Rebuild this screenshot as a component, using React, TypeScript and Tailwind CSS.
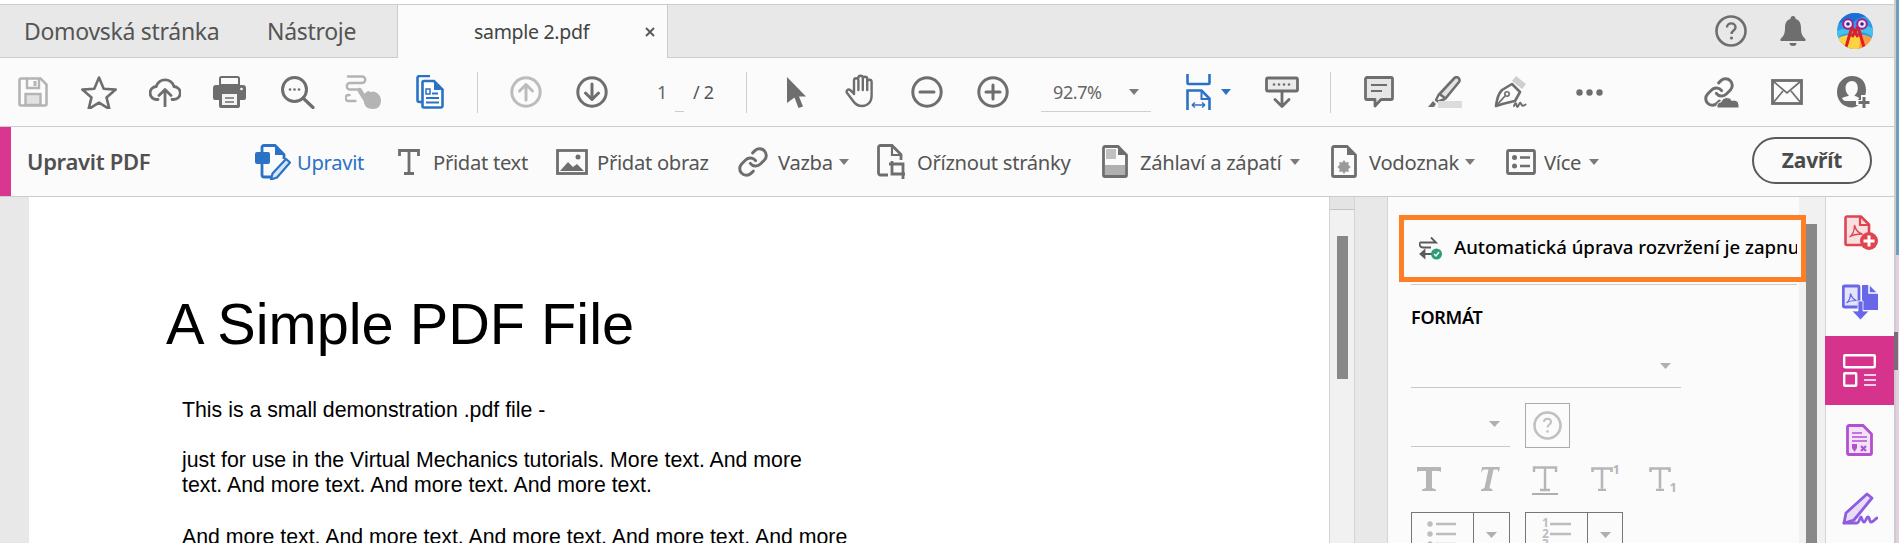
import React from "react";

const G = "#6e6e6e";
const L = "#b4b4b4";
const B = "#2a72c6";

type P = { w: number; h: number; children: React.ReactNode; className?: string };
function Ic({ w, h, className = "", children }: P) {
  return (
    <svg width={w} height={h} viewBox={`0 0 ${w} ${h}`} fill="none" className={`shrink-0 ${className}`}>
      {children}
    </svg>
  );
}
const Caret = ({ className = "", color = "#7a7a7a" }: { className?: string; color?: string }) => (
  <Ic w={10} h={6} className={className}><path d="M0 0h10L5 6z" fill={color} /></Ic>
);
const CaretL = ({ className = "", color = "#b0b0b0" }: { className?: string; color?: string }) => (
  <Ic w={11} h={6} className={className}><path d="M0 0h11L5.500 6z" fill={color} /></Ic>
);
const Sep = ({ className = "" }: { className?: string }) => <div className={`w-px h-[41px] bg-[#cfcfcf] shrink-0 ${className}`} />;

const LinkShape = ({ c = G }: { c?: string }) => (
  <g transform="scale(1.333)" stroke={c} strokeWidth="2.250" fill="none" strokeLinecap="round" strokeLinejoin="round">
    <path d="M10 13a5 5 0 0 0 7.540.540l3-3a5 5 0 0 0-7.070-7.070l-1.720 1.710" />
    <path d="M14 11a5 5 0 0 0-7.540-.540l-3 3a5 5 0 0 0 7.070 7.070l1.710-1.710" />
  </g>
);

function CircleArrow({ up, c, className }: { up?: boolean; c: string; className?: string }) {
  return (
    <Ic w={32} h={32} className={className}>
      <circle cx="16" cy="16" r="14.200" stroke={c} strokeWidth="3" />
      <path d={up ? "M16 24V9M9.500 15L16 8.500l6.500 6.500" : "M16 8v15M9.500 17l6.500 6.500 6.500-6.500"} stroke={c} strokeWidth="3" strokeLinecap="round" strokeLinejoin="round" />
    </Ic>
  );
}

const Tb = ({ t, w, ml, blue }: { t: string; w: string; ml: string; blue?: boolean }) => (
  <span className={`${w} ${ml} shrink-0 whitespace-nowrap text-[20.2px] leading-[28px] tracking-[-0.3px] ${blue ? "text-[#2a72c6]" : "text-[#555555]"}`}>{t}</span>
);

export default function App() {
  return (
    <div className="relative flex w-[1899px] h-[543px] overflow-hidden bg-white font-['Noto_Sans',sans-serif]">
      <div className="flex flex-col w-[1894px] shrink-0">
        <div className="h-[4px] bg-white shrink-0" />
        {/* Tabs */}
        <div className="flex h-[54px] shrink-0 items-stretch bg-[#e8e8e8] border-y border-[#cccccc]">
          <div className="flex items-center w-[398px] shrink-0 text-[23px] tracking-[-0.3px] text-[#555555] border-r border-[#cccccc]">
            <span className="ml-[24px] w-[243px]">Domovská stránka</span>
            <span>Nástroje</span>
          </div>
          <div className="relative flex items-center w-[270px] shrink-0 -mb-px bg-[#fbfbfb] border-r border-[#cccccc] text-[#444444]">
            <span className="ml-[76px] text-[19.5px] tracking-[-0.3px]">sample 2.pdf</span>
            <Ic w={10} h={10} className="ml-[56px]"><path d="M1 1l8 8M9 1l-8 8" stroke="#555" strokeWidth="1.800" /></Ic>
          </div>
          <div className="flex-1 flex items-center">
            <Ic w={32} h={32} className="ml-[1047px]">
              <circle cx="16" cy="16" r="14.500" stroke={G} strokeWidth="2.600" />
              <path d="M12 12.500c0-5.500 8.500-5.500 8.500 0 0 3-4 3-4 6.500" stroke={G} strokeWidth="2.400" fill="none" />
              <circle cx="16.500" cy="23" r="1.600" fill={G} />
            </Ic>
            <Ic w={26} h={30} className="ml-[33px]">
              <path d="M13 0a2.500 2.500 0 0 1 2.500 3C20 4 21 8 21 12c0 5 1 8 4.500 11v2H.5v-2C4 20 5 17 5 12c0-4 1-8 5.500-9A2.500 2.500 0 0 1 13 0z" fill={G} />
              <path d="M9.500 27h7a3.500 3 0 0 1-7 0z" fill={G} />
            </Ic>
            <Ic w={36} h={36} className="ml-[31px]">
              <defs><clipPath id="av"><circle cx="18" cy="18" r="18" /></clipPath></defs>
              <g clipPath="url(#av)">
                <rect width="36" height="36" fill="#2f9be6" />
                <path d="M0 12C6 6 10 14 18 8s12-6 18 0V0H0z" fill="#1c6fd8" />
                <path d="M0 26c6-8 10-4 18-6s12 0 18 4v-8c-8-6-12-2-18 0S6 14 0 18z" fill="#45c1ee" />
                <path d="M0 36V26c5-4 11-4 18-4s13 0 18 4v10z" fill="#ffd23f" />
                <path d="M24 22c5 0 9 2 12 4v10H22z" fill="#ff9b3f" />
                <path d="M15 14L9 34M21 14l6 20M15 14l6 10M21 14l-6 10" stroke="#e11d2a" strokeWidth="3" />
                <circle cx="11" cy="11" r="4.800" fill="#f5e6f5" stroke="#a0208c" strokeWidth="2" />
                <circle cx="25" cy="11" r="4.800" fill="#f5e6f5" stroke="#a0208c" strokeWidth="2" />
                <circle cx="11" cy="11" r="1.800" fill="#2a2a8c" />
                <circle cx="25" cy="11" r="1.800" fill="#2a2a8c" />
              </g>
            </Ic>
          </div>
        </div>

        {/* Main toolbar */}
        <div className="flex h-[69px] shrink-0 items-center bg-[#fbfbfb] border-b border-[#cccccc]">
          <Ic w={30} h={30} className="ml-[18px]">
            <path d="M3 1.500h19.500l6 6V27a1.500 1.500 0 0 1-1.500 1.500H3A1.500 1.500 0 0 1 1.500 27V3A1.500 1.500 0 0 1 3 1.500z" stroke={L} strokeWidth="2.600" />
            <path d="M9 2v9h12V2" stroke={L} strokeWidth="2.400" /><rect x="15.500" y="4" width="3" height="5" fill={L} />
            <rect x="7.500" y="17" width="15" height="11" fill="#e2e2e2" stroke={L} strokeWidth="2.400" />
          </Ic>
          <Ic w={36} h={34} className="ml-[33px]">
            <path d="M18 2.500l4.700 11.200 12 .9-9.200 7.800 2.900 11.700L18 27.700 7.600 34.100l2.900-11.700L1.300 14.600l12-.9z" stroke={G} strokeWidth="2.600" strokeLinejoin="round" />
          </Ic>
          <Ic w={32} h={30} className="ml-[32px]">
            <path d="M9 22.500H8a6.500 6.500 0 0 1-.8-13A9.300 9.300 0 0 1 25 9.500a6.500 6.500 0 0 1-.500 13H23" stroke={G} strokeWidth="2.800" strokeLinecap="round" />
            <path d="M16 29V13M10 18.500l6-6 6 6" stroke={G} strokeWidth="2.800" strokeLinecap="round" strokeLinejoin="round" />
          </Ic>
          <Ic w={33} h={32} className="ml-[32px]">
            <path d="M7 9V2.500A1.500 1.500 0 0 1 8.500 1h16A1.500 1.500 0 0 1 26 2.500V9z" stroke={G} strokeWidth="2" fill="#fbfbfb" />
            <path d="M3 9h27a3 3 0 0 1 3 3v10a2 2 0 0 1-2 2h-4v6a2 2 0 0 1-2 2H8a2 2 0 0 1-2-2v-6H2a2 2 0 0 1-2-2V12a3 3 0 0 1 3-3z" fill={G} />
            <rect x="9" y="18" width="15" height="11" fill="#f4f4f4" /><path d="M12 22h9M12 26h9" stroke={G} strokeWidth="1.700" /><circle cx="28.500" cy="13" r="1.300" fill="#fff" />
          </Ic>
          <Ic w={34} h={33} className="ml-[35px]">
            <circle cx="13.500" cy="13.500" r="12" stroke={G} strokeWidth="3" />
            <path d="M22 22l10 9.500" stroke={G} strokeWidth="3.200" strokeLinecap="round" />
            <circle cx="9" cy="13.500" r="1.300" fill={G} /><circle cx="13.500" cy="13.500" r="1.300" fill={G} /><circle cx="18" cy="13.500" r="1.300" fill={G} />
          </Ic>
          <Ic w={36} h={34} className="ml-[30px]">
            <path d="M3 1.500h14a3 3 0 0 1 0 6.500H5a3.200 3.200 0 0 0 0 6.500h7M4.500 20H3.500a3 3 0 0 0 0 6h7" stroke={L} strokeWidth="2.400" strokeLinecap="round" />
            <path d="M14.500 15l5.500 9" stroke={L} strokeWidth="4.500" strokeLinecap="round" />
            <path d="M19 19l4-3 3 1 3-.5 3 1.500c2.500 2 4 4 4 7.500 0 5-3 8.500-8 8.500-6 0-8-3-9-6z" fill={L} />
          </Ic>
          <Ic w={28} h={34} className="ml-[35px]">
            <path d="M6 27H3.500a2 2 0 0 1-2-2V3a2 2 0 0 1 2-2H14" stroke={B} strokeWidth="2.600" fill="none" />
            <path d="M8 6h10l8.500 8.500V31a1.500 1.500 0 0 1-1.500 1.500H8A1.500 1.500 0 0 1 6.500 31V7.500A1.500 1.500 0 0 1 8 6z" stroke={B} strokeWidth="2.600" fill="#fff" />
            <path d="M18 6v9h8.500z" fill={B} />
            <rect x="10" y="14" width="4" height="5" stroke={B} strokeWidth="1.500" /><path d="M16 18.500h6M10 23h13M10 27.500h13" stroke={B} strokeWidth="1.800" />
          </Ic>
          <Sep className="ml-[33px]" />
          <CircleArrow up c="#bcbcbc" className="ml-[32px]" />
          <CircleArrow c={G} className="ml-[34px]" />
          <span className="ml-[49px] w-[10px] text-[18px] text-[#666666] tracking-[-0.3px]">1</span>
          <div className="ml-[8px] w-[9px] h-px self-end mb-[14px] bg-[#cccccc]" />
          <span className="ml-[9px] w-[22px] whitespace-nowrap text-[18px] text-[#555555] tracking-[-0.3px]">/ 2</span>
          <Sep className="ml-[31px]" />
          <Ic w={19} h={31} className="ml-[40px]"><path d="M0 0l19 19.500h-7l4 10-4.500 1.500-4-10.500L0 26z" fill={G} /></Ic>
          <Ic w={32} h={36} className="ml-[39px]">
            <path d="M9 20V6.500a2.200 2.200 0 0 1 4.400 0V16m0-12a2.200 2.200 0 0 1 4.400 0v12m0-11a2.200 2.200 0 0 1 4.400 0v11m0-8a2.200 2.200 0 0 1 4.400 0v14c0 6-4 10-9.500 10-4.500 0-7-2-9-5l-6-8c-1.500-2 1-4.500 3-3l3.900 3.500" stroke={G} strokeWidth="2.400" strokeLinecap="round" strokeLinejoin="round" />
          </Ic>
          <Ic w={32} h={32} className="ml-[34px]">
            <circle cx="16" cy="16" r="14.200" stroke={G} strokeWidth="3" /><path d="M9 16h14" stroke={G} strokeWidth="3" strokeLinecap="round" />
          </Ic>
          <Ic w={32} h={32} className="ml-[34px]">
            <circle cx="16" cy="16" r="14.200" stroke={G} strokeWidth="3" /><path d="M9 16h14M16 9v14" stroke={G} strokeWidth="3" strokeLinecap="round" />
          </Ic>
          <div className="ml-[32px] w-[110px] h-[39px] mt-[1px] flex items-center border-b border-[#cfcfcf] shrink-0">
            <span className="ml-[12px] w-[76px] text-[18px] text-[#666666] tracking-[-0.4px]">92.7%</span>
            <Caret />
          </div>
          <Ic w={25} h={36} className="ml-[35px]">
            <path d="M1.500 0v9a1 1 0 0 0 1 1h20a1 1 0 0 0 1-1V0" stroke={B} strokeWidth="2.600" />
            <path d="M1.500 36V16.500h14l8 8V36" stroke={B} strokeWidth="2.600" /><path d="M15.500 16.500V25h8" stroke={B} strokeWidth="2" />
            <path d="M6 31h13M6 31l3-2.500M6 31l3 2.500M19 31l-3-2.500M19 31l-3 2.500" stroke={B} strokeWidth="1.500" />
          </Ic>
          <Caret color={B} className="ml-[10px]" />
          <Ic w={34} h={32} className="ml-[34px]">
            <rect x="1.500" y="2" width="31" height="13" rx="1.500" fill="#ebebeb" stroke={G} strokeWidth="2.800" />
            <circle cx="9" cy="8.500" r="1.300" fill={G} /><circle cx="14" cy="8.500" r="1.300" fill={G} /><circle cx="19" cy="8.500" r="1.300" fill={G} /><circle cx="24" cy="8.500" r="1.300" fill={G} />
            <path d="M17 16v14M10 23.500l7 7 7-7" stroke={G} strokeWidth="2.800" strokeLinecap="round" strokeLinejoin="round" />
          </Ic>
          <Sep className="ml-[31px]" />
          <Ic w={30} h={32} className="ml-[33px]">
            <path d="M3 1.500h24A1.500 1.500 0 0 1 28.500 3v19a1.500 1.500 0 0 1-1.500 1.500H17l-6 6.500v-6.500H3A1.500 1.500 0 0 1 1.500 22V3A1.500 1.500 0 0 1 3 1.500z" fill="#e6e6e6" stroke={G} strokeWidth="2.800" strokeLinejoin="round" />
            <path d="M7 9h16M7 15h11" stroke={G} strokeWidth="1.800" />
          </Ic>
          <Ic w={34} h={32} className="ml-[34px]">
            <path d="M26 2.500a3 3 0 0 1 5 3.500L17.500 22.500l-6-4.500z" fill="#e2e2e2" stroke={G} strokeWidth="2.600" strokeLinejoin="round" />
            <path d="M11 18l-3 6 2 1.500 7-2.500" stroke={G} strokeWidth="2.400" strokeLinejoin="round" /><path d="M0 31l5-6 3 3-2 3z" fill={G} />
            <rect x="10" y="25" width="24" height="7" fill="#dcdcdc" />
          </Ic>
          <Ic w={35} h={32} className="ml-[31px]">
            <path d="M19 5l4-5 10 8-4 5z" fill="#cfcfcf" />
            <path d="M3 30C4 22 6 17 9 14l10-6 8 8-5 9c-4 1-10 2-19 5z" stroke={G} strokeWidth="2.600" strokeLinejoin="round" fill="#fbfbfb" />
            <path d="M3 30l9-10" stroke={G} strokeWidth="1.800" /><circle cx="14" cy="18" r="2.200" stroke={G} strokeWidth="1.600" />
            <path d="M21 30c1-3 2-4 2.500-1s1.500 2 2.500-.500 1.500-2 2.500 0 1.500 1.500 4 0" stroke={G} strokeWidth="2" strokeLinecap="round" />
          </Ic>
          <Ic w={27} h={7} className="ml-[48px]">
            <circle cx="3.500" cy="3.500" r="3.200" fill={G} /><circle cx="13.500" cy="3.500" r="3.200" fill={G} /><circle cx="23.500" cy="3.500" r="3.200" fill={G} />
          </Ic>
          <Ic w={36} h={32} className="ml-[100px]">
            <LinkShape />
            <path d="M14 32v-1a4 4 0 0 1 4-5 6 6 0 0 1 11-1.500 5 5 0 0 1 7 4.500V32z" fill={G} stroke="#fbfbfb" strokeWidth="1" />
          </Ic>
          <Ic w={32} h={26} className="ml-[32px]">
            <rect x="1.500" y="1.500" width="29" height="23" fill="#fbfbfb" stroke={G} strokeWidth="2.800" />
            <path d="M2 2l14 12L30 2M2 24l10-12M30 24L20 12" stroke={G} strokeWidth="1.700" />
          </Ic>
          <Ic w={34} h={32} className="ml-[34px]">
            <path d="M15 0c8.500 0 14 5.500 14 14 0 2-.3 3.500-.7 5H24v5h-5v5h2.500c-2 1.500-4 2.500-6.500 2.500C6.500 31.500 0 25 0 16S6.500 0 15 0z" fill={G} />
            <path d="M15 5c3.700 0 5.800 3 5.800 7 0 3.500-1.500 6-3.500 7.500 1.700 1 4 1.800 5 2.500l-2 3H8c-1.500-.5-2.500-1.700-3-3 2-1 5-1.500 7-2.500-2-1.500-3.500-4-3.500-7.500 0-4 2.800-7 6.500-7z" fill="#fbfbfb" />
            <path d="M27 21v11M21.500 26.500h11" stroke={G} strokeWidth="3" />
          </Ic>
        </div>

        {/* Edit bar */}
        <div className="flex h-[70px] shrink-0 items-center bg-[#fbfbfb] border-b border-[#cccccc]">
          <div className="w-[11px] h-full bg-[#d93690] shrink-0" />
          <span className="ml-[16px] w-[124px] shrink-0 whitespace-nowrap text-[22px] font-semibold tracking-[-0.3px] text-[#505050]">Upravit PDF</span>
          <Ic w={36} h={36} className="ml-[104px]">
            <path d="M7 9V3.500A2 2 0 0 1 9 1.500h11l9 9V15" stroke={B} strokeWidth="2.800" /><path d="M20 1.500V11h9.500z" fill={B} />
            <rect x="0" y="8" width="15" height="12" rx="2" fill={B} />
            <path d="M7 20v11a2 2 0 0 0 2 2h9" stroke={B} strokeWidth="2.800" />
            <path d="M31 15l4 3.500-13 15-6 2 1.500-6z" stroke={B} strokeWidth="2.200" strokeLinejoin="round" fill="#d6e6f7" />
          </Ic>
          <Tb t="Upravit" w="w-[65px]" ml="ml-[6px]" blue />
          <Ic w={22} h={26} className="ml-[36px]">
            <path d="M11 2v22M1.500 7V1.500h19V7M6 24.500h10" stroke={G} strokeWidth="2.800" />
          </Ic>
          <Tb t="Přidat text" w="w-[94px]" ml="ml-[13px]" />
          <Ic w={32} h={26} className="ml-[29px]">
            <rect x="1.500" y="1.500" width="29" height="23" stroke={G} strokeWidth="2.800" />
            <path d="M4 22l8-9 5 5 4-3 7 7z" fill={G} /><circle cx="22" cy="8" r="2.500" fill={G} />
          </Ic>
          <Tb t="Přidat obraz" w="w-[112px]" ml="ml-[9px]" />
          <Ic w={32} h={32} className="ml-[28px]"><LinkShape /></Ic>
          <Tb t="Vazba" w="w-[54px]" ml="ml-[9px]" />
          <Caret className="ml-[7px]" />
          <Ic w={30} h={36} className="ml-[28px]">
            <path d="M11 31H3.500a2 2 0 0 1-2-2V3.500a2 2 0 0 1 2-2H15l9 9V16" stroke={G} strokeWidth="2.800" /><path d="M15 1.500V11h9" stroke={G} strokeWidth="2.200" />
            <path d="M15 17v13h13M18 20h8v15M12 20h6" stroke={G} strokeWidth="2.800" />
          </Ic>
          <Tb t="Oříznout stránky" w="w-[153px]" ml="ml-[10px]" />
          <Ic w={26} h={33} className="ml-[32px]">
            <path d="M3 1.500h13l8.500 8.500V30a1.500 1.500 0 0 1-1.500 1.500H3A1.500 1.500 0 0 1 1.500 30V3A1.500 1.500 0 0 1 3 1.500z" stroke={G} strokeWidth="2.800" />
            <path d="M16 1.500V10h8.500z" fill={G} /><rect x="4" y="4" width="10" height="10" fill="#c0c0c0" /><rect x="3" y="20" width="20" height="10" fill="#b0b0b0" />
          </Ic>
          <Tb t="Záhlaví a zápatí" w="w-[144px]" ml="ml-[12px]" />
          <Caret className="ml-[6px]" />
          <Ic w={26} h={33} className="ml-[31px]">
            <path d="M3 1.500h13l8.500 8.500V30a1.500 1.500 0 0 1-1.500 1.500H3A1.500 1.500 0 0 1 1.500 30V3A1.500 1.500 0 0 1 3 1.500z" stroke={G} strokeWidth="2.800" />
            <path d="M16 1.500V10h8.500z" fill={G} />
            <path d="M13 15l1.800 2.500 3-.5-.5 3 2.500 2-2.500 2 .5 3-3-.5L13 29l-1.800-2.500-3 .5.5-3L6.200 22l2.500-2-.5-3 3 .5z" fill="#9a9a9a" />
          </Ic>
          <Tb t="Vodoznak" w="w-[91px]" ml="ml-[12px]" />
          <Caret className="ml-[5px]" />
          <Ic w={30} h={26} className="ml-[31px]">
            <rect x="1.500" y="1.500" width="27" height="23" rx="1.500" stroke={G} strokeWidth="2.800" />
            <circle cx="8.500" cy="8.500" r="2.500" fill={G} /><circle cx="8.500" cy="17" r="2.500" fill={G} />
            <path d="M14 8.500h10M14 17h10" stroke={G} strokeWidth="2.600" />
          </Ic>
          <Tb t="Více" w="w-[39px]" ml="ml-[8px]" />
          <Caret className="ml-[6px]" />
          <button className="ml-[153px] w-[120px] h-[47px] mb-[2px] rounded-full border-2 border-[#5a5a5a] text-[21px] font-bold text-[#4b4b4b] tracking-[-0.2px]">Zavřít</button>
        </div>

        {/* Body */}
        <div className="relative flex flex-1 min-h-0">
          <div className="w-[29px] bg-[#e8e8e8] shrink-0" />
          <div className="w-[1300px] shrink-0 bg-white font-['Liberation_Sans',sans-serif] text-black overflow-hidden">
            <h1 className="ml-[137px] mt-[94px] text-[57.700px] leading-[66px] whitespace-nowrap">A Simple PDF File</h1>
            <div className="ml-[153px] mt-[41px] text-[21.3px] leading-[25px] whitespace-nowrap">
              <p>This is a small demonstration .pdf file -</p>
              <p className="mt-[25px]">just for use in the Virtual Mechanics tutorials. More text. And more</p>
              <p>text. And more text. And more text. And more text.</p>
              <p className="mt-[27px]">And more text. And more text. And more text. And more text. And more</p>
            </div>
          </div>
          <div className="w-[26px] shrink-0 bg-[#f1f1f1] border-x border-[#d4d4d4]">
            <div className="h-[13px] bg-[#e4e4e4] border-b border-[#c4c4c4]" />
            <div className="ml-[7px] mt-[26px] w-[11px] h-[143px] bg-[#888888]" />
          </div>
          <div className="w-[33px] shrink-0 bg-[#e8e8e8] border-r border-[#d4d4d4]" />
          <div className="w-[411px] shrink-0 bg-[#fbfbfb] pl-[23px] overflow-hidden">
            <div className="mt-[87px] w-[386px] border-t border-[#cccccc]" />
            <div className="mt-[20px] text-[18px] leading-[24px] font-semibold text-black tracking-[-0.3px]">FORMÁT</div>
            <div className="mt-[24px] w-[270px] h-[35px] flex items-center justify-end pr-[10px] border-b border-[#c8c8c8]">
              <CaretL className="mb-[8px]" />
            </div>
            <div className="mt-[15px] flex">
              <div className="w-[99px] h-[44px] flex items-center justify-end pr-[10px] border-b border-[#c8c8c8]">
                <CaretL className="-mt-[2px]" />
              </div>
              <div className="ml-[15px] w-[45px] h-[45px] flex items-center justify-center border border-[#ababab]">
                <Ic w={29} h={29}>
                  <circle cx="14.500" cy="14.500" r="13" stroke="#c0c0c0" strokeWidth="2.600" />
                  <path d="M11 11c0-4.500 7-4.500 7 0 0 2.500-3.500 2.500-3.500 5.500" stroke="#c0c0c0" strokeWidth="2" />
                  <circle cx="14.500" cy="20.500" r="1.300" fill="#c0c0c0" />
                </Ic>
              </div>
            </div>
            <div className="mt-[18px] flex items-start h-[32px]">
              <Ic w={24} h={25} className="ml-[6px]">
                <path d="M0 6V1h24v5l-2-1H15v17l4 1.500V25H5v-1.500L9 22V5H2z" fill="#b6b6b6" />
              </Ic>
              <Ic w={24} h={25} className="ml-[35px]">
                <path d="M5 6.500l1.200-5.500H24l-1.200 5.500-1.300-3h-4L13.500 22l3 1.500V25H5v-1.500l3.500-1.500 4-18.500H7.500z" fill="#b6b6b6" />
              </Ic>
              <Ic w={26} h={29} className="ml-[32px]">
                <path d="M2 6V1.500h22V6M13 2v21M8 24h10" stroke="#b6b6b6" strokeWidth="2.400" /><path d="M0 28h26" stroke="#8f8f8f" strokeWidth="1.400" />
              </Ic>
              <div className="ml-[33px] w-[29px] relative h-[25px] shrink-0">
                <Ic w={22} h={25}><path d="M1.500 6V2.500h19V6M11 2.500v20M7 24h8" stroke="#b6b6b6" strokeWidth="2.600" /></Ic>
                <span className="absolute right-0 -top-[4px] text-[13px] leading-[14px] font-bold text-[#b6b6b6]">1</span>
              </div>
              <div className="ml-[29px] w-[28px] relative h-[25px] shrink-0">
                <Ic w={22} h={25}><path d="M1.500 6V2.500h19V6M11 2.500v20M7 24h8" stroke="#b6b6b6" strokeWidth="2.600" /></Ic>
                <span className="absolute right-0 top-[14px] text-[13px] leading-[14px] font-bold text-[#b6b6b6]">1</span>
              </div>
            </div>
            <div className="mt-[14px] flex">
              {[0, 1].map((k) => (
                <div key={k} className={`flex h-[50px] border border-[#777777] ${k ? "ml-[15px] w-[98px]" : "w-[99px]"}`}>
                  <div className="relative w-[62px] border-r border-[#777777]">
                    {k === 0 ? (
                      <Ic w={30} h={40} className="ml-[14px] mt-[7px]">
                        <circle cx="4" cy="4" r="2.700" fill="#bdbdbd" /><circle cx="4" cy="14" r="2.700" fill="#bdbdbd" /><circle cx="4" cy="24" r="2.700" fill="#bdbdbd" />
                        <path d="M10 4h21M10 14h21M10 24h21" stroke="#bdbdbd" strokeWidth="2.600" />
                      </Ic>
                    ) : (
                      <div className="ml-[16px] mt-[5px] flex">
                        <div className="text-[12px] leading-[10.500px] font-bold text-[#bdbdbd]">1<br />2<br />3</div>
                        <Ic w={22} h={30} className="ml-[1px]"><path d="M0 6h21M0 16h21" stroke="#bdbdbd" strokeWidth="2.600" /></Ic>
                      </div>
                    )}
                  </div>
                  <div className="flex-1 flex justify-center pt-[19px]"><CaretL /></div>
                </div>
              ))}
            </div>
          </div>
          <div className="w-[26px] shrink-0 bg-[#f1f1f1]">
            <div className="ml-[7px] mt-[27px] w-[11px] h-[400px] bg-[#888888]" />
          </div>
          {/* Tools rail */}
          <div className="w-[69px] shrink-0 flex flex-col bg-[#fbfbfb] border-l border-[#d4d4d4]">
            <div className="h-[70px] flex items-center justify-center -ml-px">
              <Ic w={34} h={35} className="ml-[2px]">
                <path d="M3 1.500h14l8 8V30H3A1.500 1.500 0 0 1 1.500 28.500V3A1.500 1.500 0 0 1 3 1.500z" fill="#f9dfe0" stroke="#e0444f" strokeWidth="2.600" />
                <path d="M16 1.500V10h8.500" stroke="#e0444f" strokeWidth="2.200" />
                <path d="M5.500 22c3-2 5-7 5-12 1 5 4 8 8 9-4 0-9 0-13 3z" stroke="#e0444f" strokeWidth="1.300" fill="none" />
                <circle cx="25" cy="26" r="9" fill="#e0444f" /><path d="M25 20.500v11M19.500 26h11" stroke="#fff" strokeWidth="3" />
              </Ic>
            </div>
            <div className="h-[69px] flex items-center justify-center -ml-px">
              <Ic w={36} h={36}>
                <path d="M2.500 2H16a1 1 0 0 1 1 1v20H2.500a1.200 1.200 0 0 1-1.200-1.200V3.200A1.200 1.200 0 0 1 2.500 2z" fill="#e4e4fa" stroke="#6767e8" strokeWidth="2.800" />
                <path d="M4.500 19c2.500-2 4-5.500 4-9.500 1 3.500 3 6 6 7-3 0-7 0-10 2.500z" stroke="#6767e8" strokeWidth="1.200" />
                <path d="M20 1h7l9 9v16H20z" fill="#6767e8" /><path d="M27 0v9h9" stroke="#fff" strokeWidth="1.500" />
                <path d="M16 17h5v10h6l-8.500 9L10 27h6z" fill="#6767e8" stroke="#fbfbfb" strokeWidth=".8" />
              </Ic>
            </div>
            <div className="h-[69px] -ml-px bg-[#d6338c] flex items-center justify-center">
              <Ic w={33} h={33}>
                <rect x="1.200" y="1.200" width="30.600" height="12" rx="1" stroke="#fff" strokeWidth="2.400" />
                <rect x="1.200" y="19.200" width="12" height="12.600" rx=".8" stroke="#fff" strokeWidth="2.400" />
                <path d="M21 21h12M21 26h12M21 31h12" stroke="#fff" strokeWidth="1.700" />
              </Ic>
            </div>
            <div className="h-[69px] flex items-center justify-center -ml-px">
              <Ic w={27} h={32}>
                <path d="M3 1.500h14l8.500 8.500V29a1.500 1.500 0 0 1-1.500 1.500H3A1.500 1.500 0 0 1 1.500 29V3A1.500 1.500 0 0 1 3 1.500z" fill="#f3e3f8" stroke="#b44fd1" strokeWidth="2.800" />
                <path d="M6 9h10M6 13h15M6 17h15" stroke="#b44fd1" strokeWidth="1.700" />
                <path d="M6 20h5v4l-2.500 4L6 24z" fill="#b44fd1" /><path d="M15 22l5 5M20 22l-5 5" stroke="#b44fd1" strokeWidth="2.200" />
              </Ic>
            </div>
            <div className="h-[69px] flex items-center justify-center -ml-px">
              <Ic w={36} h={34}>
                <path d="M25 2l5 4L12 28l-10 3 2-10z" fill="#e8dcf8" stroke="#8d5de0" strokeWidth="2.800" strokeLinejoin="round" />
                <path d="M2 31h13c2 0 3-6 4-6s1 5 3 5 2-5 4-5 1 5 3 5 3-2 6-4" stroke="#8d5de0" strokeWidth="2.800" strokeLinecap="round" />
              </Ic>
            </div>
          </div>

          {/* Orange annotation frame */}
          <div className="absolute left-[1399px] top-[18px] w-[407px] h-[67px] border-[5px] border-[#ff7f27] bg-[#fbfbfb] flex items-center overflow-hidden pr-[4px]">
            <Ic w={23} h={24} className="ml-[15px] -mt-[2px]">
              <path d="M1 6.500h15M12 1.500l5 5-5 0M1 6.500c-1 2 0 5 3 5h8" stroke="#5a5a5a" strokeWidth="1.800" />
              <path d="M14 18H2M5.500 14.500L1.500 18l4 3.500z" stroke="#5a5a5a" strokeWidth="1.800" fill="#5a5a5a" />
              <circle cx="17.500" cy="18" r="5.500" fill="#2d9d78" /><path d="M15 18l2 2 3-4" stroke="#fff" strokeWidth="1.400" fill="none" />
            </Ic>
            <div className="ml-[12px] -mt-[3px] overflow-hidden flex-1 whitespace-nowrap text-[18.600px] font-medium text-black">Automatická úprava rozvržení je zapnuta</div>
          </div>
        </div>
      </div>
      {/* Window behind */}
      <div className="relative w-[5px] shrink-0 flex flex-col border-l-2 border-black/20">
        <div className="h-[255px] bg-[#6f9fbd]" />
        <div className="flex-1 bg-[#e3d0de]" />
        <div className="absolute -left-[2px] top-[332px] w-[4px] h-[38px] bg-[#7a6b78]" />
      </div>
    </div>
  );
}
